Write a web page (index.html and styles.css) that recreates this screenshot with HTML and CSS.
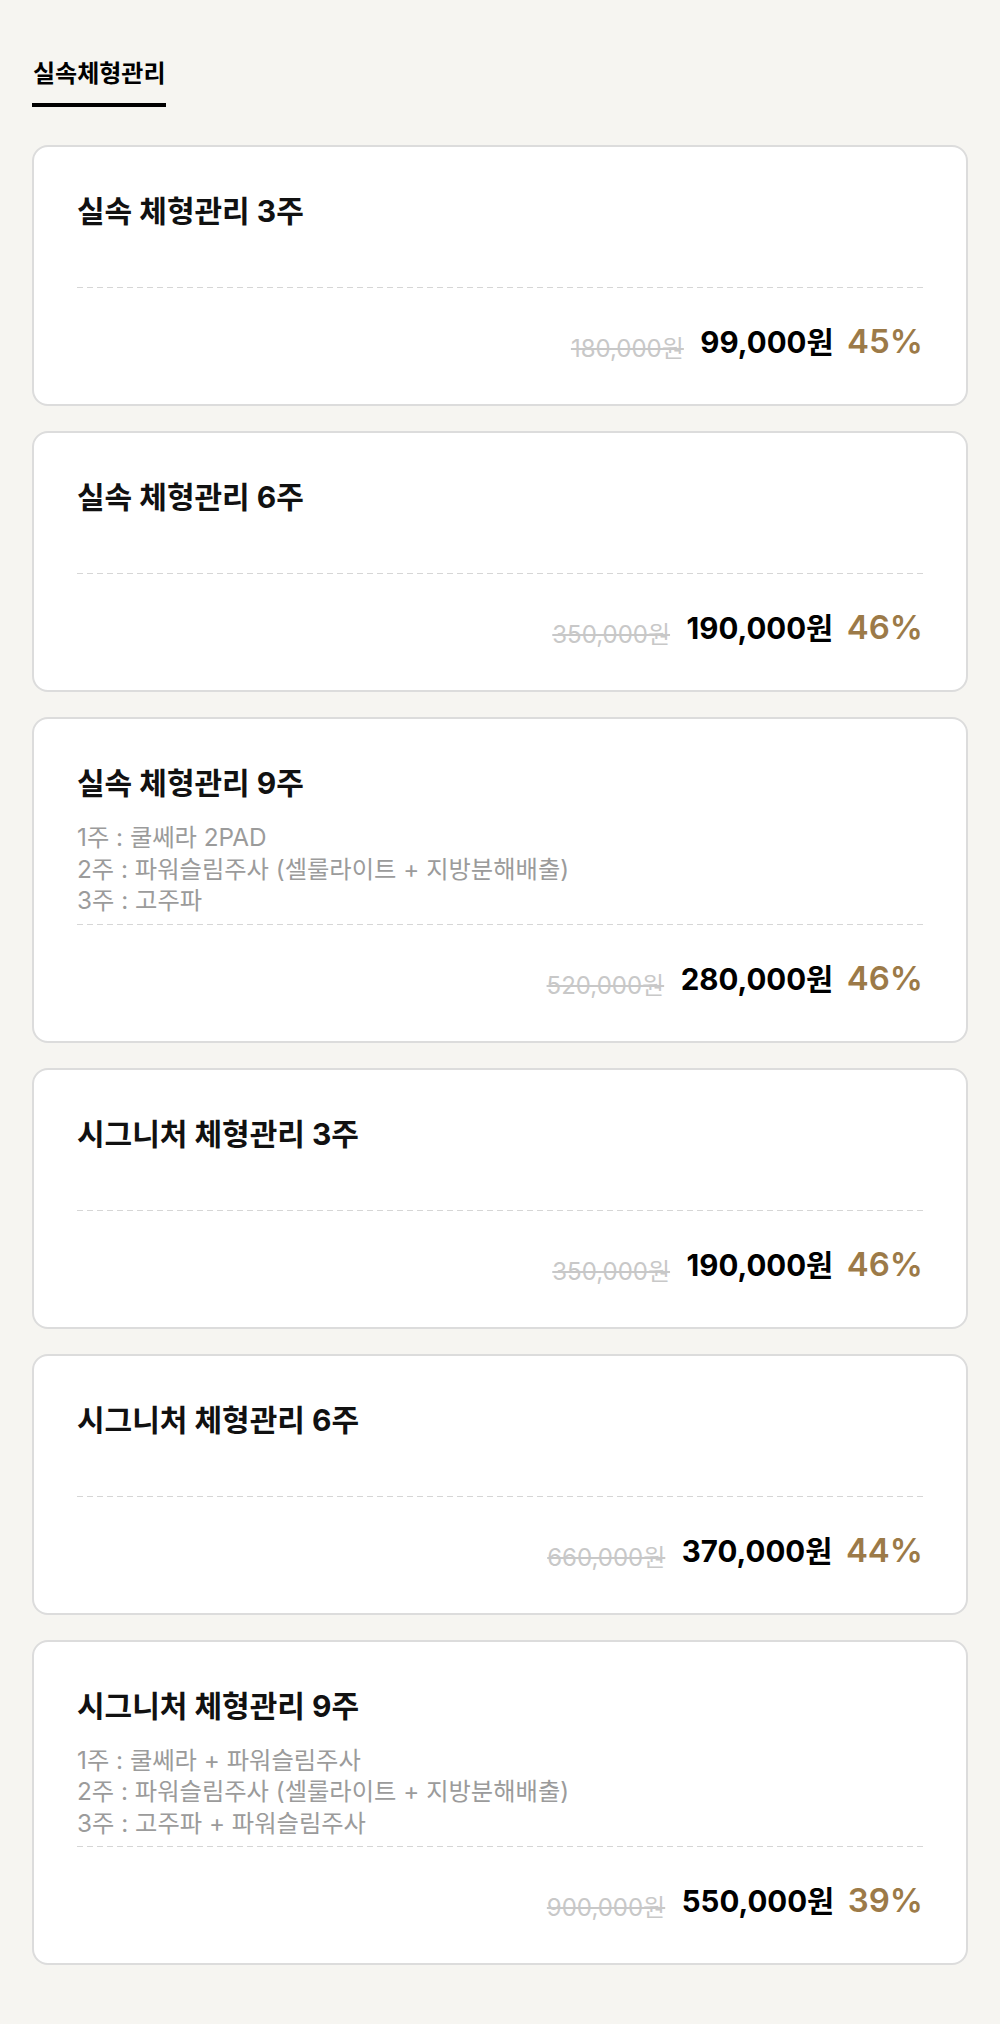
FILE: index.html
```html
<!DOCTYPE html>
<html lang="ko">
<head>
    <meta charset="UTF-8">
    <meta name="viewport" content="width=device-width, initial-scale=1.0">
    <title>실속체형관리</title>
    <link rel="stylesheet" href="styles.css">
</head>
<body>
    <div class="page">
        <div class="tabs">
            <span class="tab active">실속체형관리</span>
        </div>

        <div class="list">
            <div class="card">
                <div class="card-head">
                    <h3 class="title">실속 체형관리 3주</h3>
                </div>
                <div class="price">
                    <span class="origin">180,000원</span>
                    <span class="sale">99,000원</span>
                    <span class="rate">45%</span>
                </div>
            </div>

            <div class="card">
                <div class="card-head">
                    <h3 class="title">실속 체형관리 6주</h3>
                </div>
                <div class="price">
                    <span class="origin">350,000원</span>
                    <span class="sale">190,000원</span>
                    <span class="rate">46%</span>
                </div>
            </div>

            <div class="card">
                <div class="card-head">
                    <h3 class="title">실속 체형관리 9주</h3>
                    <p class="desc">1주 : 쿨쎄라 2PAD<br>2주 : 파워슬림주사 (셀룰라이트 + 지방분해배출)<br>3주 : 고주파</p>
                </div>
                <div class="price">
                    <span class="origin">520,000원</span>
                    <span class="sale">280,000원</span>
                    <span class="rate">46%</span>
                </div>
            </div>

            <div class="card">
                <div class="card-head">
                    <h3 class="title">시그니처 체형관리 3주</h3>
                </div>
                <div class="price">
                    <span class="origin">350,000원</span>
                    <span class="sale">190,000원</span>
                    <span class="rate">46%</span>
                </div>
            </div>

            <div class="card">
                <div class="card-head">
                    <h3 class="title">시그니처 체형관리 6주</h3>
                </div>
                <div class="price">
                    <span class="origin">660,000원</span>
                    <span class="sale">370,000원</span>
                    <span class="rate">44%</span>
                </div>
            </div>

            <div class="card">
                <div class="card-head">
                    <h3 class="title">시그니처 체형관리 9주</h3>
                    <p class="desc">1주 : 쿨쎄라 + 파워슬림주사<br>2주 : 파워슬림주사 (셀룰라이트 + 지방분해배출)<br>3주 : 고주파 + 파워슬림주사</p>
                </div>
                <div class="price">
                    <span class="origin">900,000원</span>
                    <span class="sale">550,000원</span>
                    <span class="rate">39%</span>
                </div>
            </div>
        </div>
    </div>
</body>
</html>
```

FILE: styles.css
```css
* {
    box-sizing: border-box;
}
body {
    margin: 0;
    background-color: #f6f5f1;
    font-family: Inter, "Noto Sans CJK KR", sans-serif;
    color: #000;
}
.page {
    padding: 59px 32px 60px;
}
.tabs {
    display: flex;
}
.tab {
    font-size: 24px;
    font-weight: 700;
    line-height: 30px;
    padding: 0 1px 14px;
    border-bottom: 4px solid #000;
}
.list {
    margin-top: 38px;
    display: flex;
    flex-direction: column;
    gap: 25px;
}
.card {
    background: #fff;
    border: 2px solid #dcdcdc;
    border-radius: 16px;
    padding: 44px 43px 35px;
}
.card-head {
    min-height: 97px;
    padding-bottom: 8px;
    background-image: repeating-linear-gradient(to right, #d6d6d6 0 6px, transparent 6px 10px);
    background-size: 100% 1px;
    background-repeat: no-repeat;
    background-position: left bottom;
}
.title {
    margin: 0;
    font-size: 30px;
    font-weight: 700;
    line-height: 40px;
    color: #111;
}
.desc {
    margin: 19px 0 0;
    font-size: 24.3px;
    line-height: 31.5px;
    color: #9b9b9b;
}
.price {
    margin-top: 33px;
    text-align: right;
    line-height: 40px;
    white-space: nowrap;
}
.origin {
    font-size: 24px;
    color: #c8c8c8;
    text-decoration: line-through;
    vertical-align: -4px;
}
.sale {
    margin-left: 12px;
    font-size: 29.5px;
    font-weight: 700;
}
.rate {
    margin-left: 9px;
    font-size: 33px;
    font-weight: 600;
    color: #9c7a48;
}
```
